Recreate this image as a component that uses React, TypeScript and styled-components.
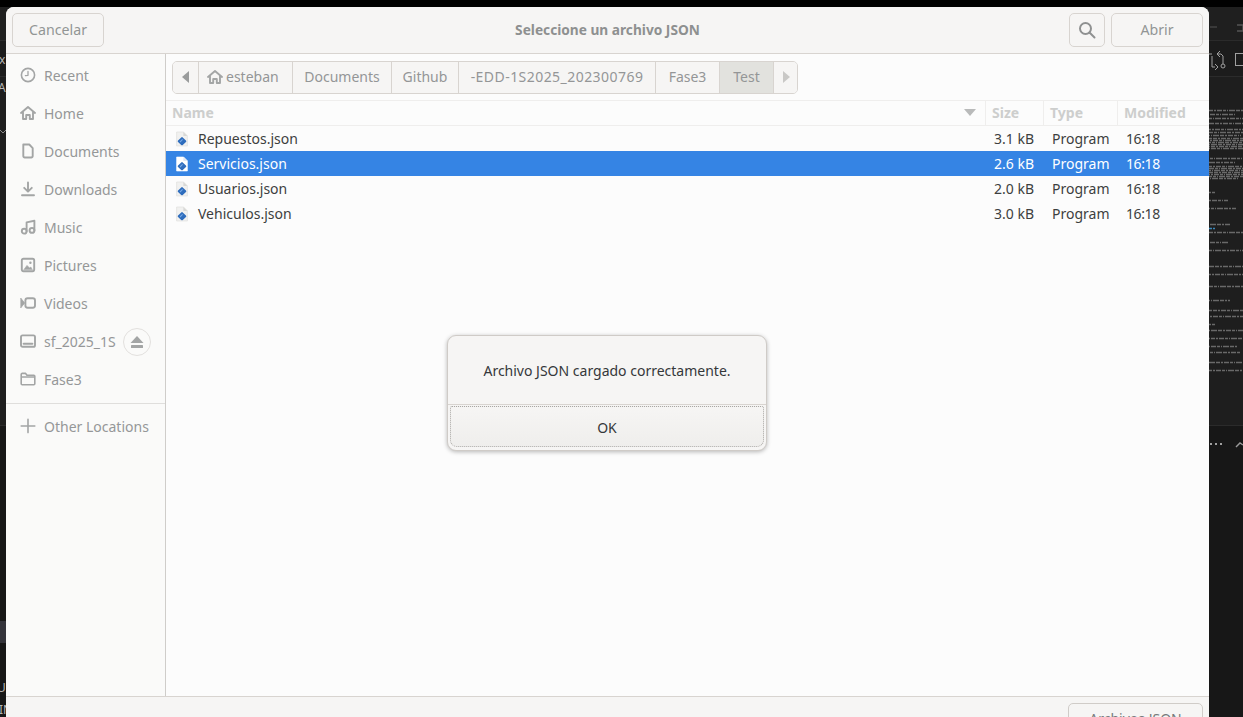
import React from "react";
import styled, { createGlobalStyle } from "styled-components";

const Global = createGlobalStyle`
  html, body { margin: 0; padding: 0; height: 100%; background: #171717; overflow: hidden; }
  #root { height: 100%; }
  * { box-sizing: border-box; }
`;

const Page = styled.div`
  position: relative;
  width: 1243px;
  height: 717px;
  overflow: hidden;
  font-family: "Noto Sans", "Open Sans", sans-serif;
  font-size: 14px;
`;

/* ---- editor behind the dialog ---- */
const Backdrop = styled.div`
  display: flex;
  flex-direction: column;
  height: 100%;
`;
const BlackStrip = styled.div`
  height: 7px;
  background: #000;
`;
const EditorBar = styled.div<{ $h: number; $bg: string }>`
  height: ${(p) => p.$h}px;
  flex: none;
  background: ${(p) => p.$bg};
  border-bottom: 1px solid #2b2b2b;
`;
const EditorPane = styled.div`
  height: 349px;
  flex: none;
  background: #1e1e1e;
  border-bottom: 1px solid #2b2b2b;
`;
const EditorBody = styled.div`
  flex: 1;
  background: #171717;
`;
const Peek = styled.span<{ $x: number; $y: number }>`
  position: absolute;
  left: ${(p) => p.$x}px;
  top: ${(p) => p.$y}px;
  color: #b5b5b5;
  font-size: 12px;
  line-height: 14px;
  font-family: "Noto Sans", sans-serif;
`;
const ActiveStrip = styled.div`
  position: absolute;
  left: 0;
  top: 621px;
  width: 6px;
  height: 22px;
  background: #33333a;
`;
const DocPreview = styled.svg`
  position: absolute;
  left: 1209px;
  top: 100px;
`;
const EditorIcons = styled.svg<{ $top: number }>`
  position: absolute;
  left: 1209px;
  top: ${(p) => p.$top}px;
`;
const LeftChevron = styled.svg`
  position: absolute;
  left: 0;
  top: 129px;
`;

/* ---- file chooser ---- */
const Win = styled.div`
  position: absolute;
  left: 6px;
  top: 7px;
  width: 1203px;
  height: 722px;
  background: #fafafa;
  border-radius: 8px 8px 0 0;
  display: flex;
  flex-direction: column;
  overflow: hidden;
`;
const Header = styled.header`
  position: relative;
  flex: none;
  height: 47px;
  padding: 6px;
  background: #f6f5f4;
  border-bottom: 1px solid #d8d4d0;
  display: flex;
  align-items: center;
  gap: 6px;
`;
const HeadBtn = styled.div<{ $w: number }>`
  width: ${(p) => p.$w}px;
  height: 34px;
  padding-bottom: 2px;
  border: 1px solid #d8d4d0;
  border-radius: 5px;
  background: #f6f5f4;
  color: #929595;
  font-size: 14.2px;
  display: flex;
  align-items: center;
  justify-content: center;
`;
const SearchBtn = styled(HeadBtn)`
  margin-left: auto;
  padding-bottom: 0;
`;
const Title = styled.div`
  position: absolute;
  left: 0;
  right: 0;
  top: 13px;
  text-align: center;
  font-weight: 700;
  font-size: 13.7px;
  line-height: 20px;
  color: #8e9090;
`;
const Main = styled.div`
  position: relative;
  flex: 1;
  display: flex;
  min-height: 0;
`;
const Side = styled.nav`
  flex: none;
  width: 160px;
  background: #fafaf9;
  border-right: 1px solid #cfcdca;
  display: flex;
  flex-direction: column;
  padding-top: 2px;
`;
const Place = styled.div<{ $h?: number }>`
  height: ${(p) => p.$h ?? 38}px;
  flex: none;
  display: flex;
  align-items: center;
  padding-left: 14px;
  gap: 8px;
  color: #959798;
  font-size: 14px;
  white-space: nowrap;
`;
const Eject = styled.div`
  position: absolute;
  left: 117px;
  top: 274px;
  width: 28px;
  height: 28px;
  border-radius: 50%;
  border: 1px solid #e2e0de;
  display: flex;
  align-items: center;
  justify-content: center;
`;
const SideRule = styled.div`
  height: 1px;
  background: #dfdedc;
  margin-top: 5px;
  margin-bottom: 3px;
`;
const Content = styled.section`
  flex: 1;
  min-width: 0;
  background: #fcfcfc;
  display: flex;
  flex-direction: column;
`;
const PathRow = styled.div`
  flex: none;
  height: 47px;
  padding: 7px 6px;
  border-bottom: 1px solid #efeeed;
`;
const PathBar = styled.div`
  display: inline-flex;
  height: 33px;
  border: 1px solid #d8d4d0;
  border-radius: 5px;
  overflow: hidden;
  background: #f6f5f4;
`;
const Crumb = styled.div<{ $w: number; $on?: boolean; $track?: number }>`
  width: ${(p) => p.$w}px;
  padding-bottom: 2px;
  border-right: 1px solid #d8d4d0;
  background: ${(p) => (p.$on ? "#e2e2de" : "#f6f5f4")};
  color: #949697;
  font-size: 14px;
  letter-spacing: ${(p) => p.$track ?? 0}px;
  display: flex;
  align-items: center;
  justify-content: center;
  gap: 4px;
  white-space: nowrap;
  &:last-child { border-right: 0; }
`;
const HomeCrumb = styled(Crumb)`
  justify-content: flex-start;
  padding-left: 8px;
  gap: 3px;
`;
const Cols = "820px 58px 74px 1fr";
const ColHead = styled.div`
  flex: none;
  height: 25px;
  display: grid;
  grid-template-columns: ${Cols};
  border-bottom: 1px solid #efeeed;
`;
const ColLabel = styled.div<{ $first?: boolean }>`
  display: flex;
  align-items: center;
  justify-content: space-between;
  padding: 0 ${(p) => (p.$first ? "9px" : "6px")} 2px 6px;
  border-right: 1px solid #efeeed;
  font-weight: 700;
  font-size: 14px;
  color: #cdcecd;
  &:last-child { border-right: 0; }
`;
const FileRow = styled.div<{ $on?: boolean }>`
  height: 25px;
  display: grid;
  grid-template-columns: ${Cols};
  align-items: center;
  background: ${(p) => (p.$on ? "#3584e4" : "transparent")};
  color: ${(p) => (p.$on ? "#ffffff" : "#3d3f40")};
  font-size: 14px;
`;
const NameCell = styled.div`
  display: flex;
  align-items: center;
  gap: 8px;
  padding-left: 8px;
`;
const Cell = styled.div<{ $track?: number }>`
  padding-left: 8px;
  letter-spacing: ${(p) => p.$track ?? 0}px;
`;
const Footer = styled.footer`
  flex: none;
  height: 33px;
  background: #f6f5f4;
  border-top: 1px solid #d8d4d0;
  display: flex;
  justify-content: flex-end;
  padding: 6px 6px 0 0;
`;
const Filter = styled.div`
  width: 135px;
  height: 34px;
  border: 1px solid #d0ccc8;
  border-radius: 5px;
  color: #777a7b;
  text-align: center;
  font-size: 14px;
  line-height: 30px;
`;

/* ---- message box ---- */
const Alert = styled.div`
  position: absolute;
  left: 447px;
  top: 335px;
  width: 320px;
  height: 116px;
  background: #f6f5f4;
  border: 1px solid #cfcbc7;
  border-radius: 9px;
  box-shadow: 0 1px 4px rgba(0, 0, 0, 0.28);
  display: flex;
  flex-direction: column;
  overflow: hidden;
`;
const AlertText = styled.div`
  height: 69px;
  flex: none;
  display: flex;
  align-items: center;
  justify-content: center;
  font-size: 14px;
  color: #35383a;
  border-bottom: 1px solid #d8d4d0;
`;
const AlertBtn = styled.div`
  flex: 1;
  margin: 1px 2px 3px;
  padding-top: 1px;
  border: 1px dotted #a9a7a4;
  border-radius: 2px 2px 7px 7px;
  background: linear-gradient(#f6f5f4, #efeeec);
  display: flex;
  align-items: center;
  justify-content: center;
  font-size: 14px;
  color: #35383a;
`;

/* ---- icons ---- */
const Ic = ({ children, c = "#a3a5a5", s = 16 }: { children: React.ReactNode; c?: string; s?: number }) => (
  <svg width={s} height={s} viewBox="0 0 16 16" fill="none" stroke={c} strokeWidth="1.9" strokeLinecap="round" strokeLinejoin="round" style={{ flex: "none" }}>
    {children}
  </svg>
);
const icons: Record<string, React.ReactNode> = {
  recent: (<><circle cx="8" cy="8" r="6.6" strokeWidth="1.6" /><path d="M8 4.5V8.3L5.4 8.6" strokeWidth="1.3" /></>),
  home: (<><path d="M1 8 8 2l7 6" /><path d="M3 7.5V14h3.2v-4h3.6v4H13V7.5" /></>),
  doc: (<path d="M3.3 1.5h6l3.4 3.6v8a1.4 1.4 0 0 1-1.4 1.4H4.7a1.4 1.4 0 0 1-1.4-1.4Z" />),
  down: (<><path d="M8 1.5V10M4.2 6.8 8 10.6l3.8-3.8" /><path d="M2 14.3h12" /></>),
  music: (<><circle cx="4.2" cy="12.2" r="2.4" /><circle cx="12" cy="11.4" r="2.4" /><path d="M6.6 12.2V3.4l7.8-1.6v9.6" /></>),
  pic: (<><rect x="1.8" y="1.8" width="12.4" height="12.4" rx="1.6" /><circle cx="10.4" cy="5.8" r="1.2" fill="#a3a5a5" stroke="none" /><path d="M4 12.4 7 8.4l2.6 2.6 1.2-1 1.4 2.4Z" fill="#a3a5a5" strokeWidth=".6" /></>),
  video: (<><rect x="5.4" y="3.2" width="9.6" height="9.6" rx="2.2" /><path d="M1 3.4 4.6 8 1 12.6Z" fill="#a3a5a5" strokeWidth=".8" /></>),
  drive: (<><rect x="1" y="2.4" width="14" height="11.4" rx="1.6" /><path d="M3.6 10.8h8.8" /></>),
  folder: (<path d="M1.2 3.4a1 1 0 0 1 1-1h3.4l1.4 1.8h6.8a1 1 0 0 1 1 1v7.6a1 1 0 0 1-1 1H2.2a1 1 0 0 1-1-1Z M1.2 6h13.6" strokeWidth="1.6" />),
  plus: (<path d="M8 1.4v13.2M1.2 8h13.6" strokeWidth="1.6" />),
};

const JsonFile = ({ on }: { on?: boolean }) => (
  <svg width="16" height="16" viewBox="0 0 16 16" style={{ flex: "none" }}>
    <path d="M2.6 1h7l3.8 3.8V15H2.6Z" fill={on ? "#fff" : "#f1f1f0"} stroke={on ? "#fff" : "#dcdcda"} strokeWidth=".6" />
    <path d="M9.4 1v4h4Z" fill={on ? "#dfe7f2" : "#d8d8d6"} />
    <path d="M8 7.2 11.2 10.2 8 13.2 4.8 10.2Z" fill="#2f6dbd" stroke="#2f6dbd" strokeWidth="2.2" strokeLinejoin="round" />
    <path d="M6 11 8.6 8.4" stroke="#74a6e4" strokeWidth="1.1" />
  </svg>
);

const places = [
  ["recent", "Recent"],
  ["home", "Home"],
  ["doc", "Documents"],
  ["down", "Downloads"],
  ["music", "Music"],
  ["pic", "Pictures"],
  ["video", "Videos"],
  ["drive", "sf_2025_1S"],
  ["folder", "Fase3"],
];
const crumbs: [string, number, number][] = [
  ["Documents", 99, 0],
  ["Github", 67, 0],
  ["-EDD-1S2025_202300769", 197, 0.45],
  ["Fase3", 64, 0],
];
const files = [
  ["Repuestos.json", "3.1 kB"],
  ["Servicios.json", "2.6 kB"],
  ["Usuarios.json", "2.0 kB"],
  ["Vehiculos.json", "3.0 kB"],
];

/* greyed-out document text seen past the dialog's right edge, as y / length pairs */
const docLines: [number, number][] = [
  [10, 34], [14, 26], [18, 34], [23, 34], [29, 34], [32, 34], [35, 32], [38, 34], [40, 34], [42, 34], [44, 34], [46, 34], [48, 34],
  [58, 34], [62, 26], [66, 34], [68, 34], [70, 34], [72, 34], [74, 34], [76, 34], [78, 30],
  [92, 6], [100, 19], [108, 27], [124, 22], [132, 34], [142, 19], [150, 34], [166, 34], [174, 34], [186, 34],
  [200, 21], [210, 34], [216, 34], [224, 6], [230, 34], [238, 34], [246, 29], [252, 31], [262, 34], [270, 34],
];

export default function App() {
  return (
    <Page>
      <Global />
      <Backdrop>
        <BlackStrip />
        <EditorBar $h={34} $bg="#1f1f1f" />
        <EditorBar $h={36} $bg="#1c1c1c" />
        <EditorPane />
        <EditorBody />
      </Backdrop>
      <Peek $x={-1} $y={53}>x</Peek>
      <Peek $x={-2} $y={81}>A</Peek>
      <Peek $x={-3} $y={681}>U</Peek>
      <Peek $x={-1} $y={703}>IN</Peek>
      <LeftChevron width="6" height="6" viewBox="0 0 6 6" fill="none" stroke="#8a8a8a" strokeWidth="1">
        <path d="M0 1l3 3 3-3" />
      </LeftChevron>
      <ActiveStrip />
      <EditorIcons $top={7} width="34" height="70" viewBox="0 0 34 70" fill="none" stroke="#a0a0a0" strokeWidth="1">
        <path d="M1 20h7" stroke="#555" />
        <path d="M28 24h6M28 18h6v6" stroke="#555" strokeWidth="1.4" />
        <path d="M0 47h3M3 49v11M8 47l4 0 2 2v8M11 44 8 47l3 3M3 60h3M6 57l3 3-3 3" />
        <circle cx="14" cy="59" r="2" />
        <rect x="26.500" y="46.500" width="8" height="12" />
      </EditorIcons>
      <DocPreview width="34" height="290" viewBox="0 0 34 290" fill="none">
        {docLines.map(([y, w], i) => (
          <line
            key={i}
            x1="0"
            x2={w}
            y1={y + 0.5}
            y2={y + 0.5}
            stroke="#b4b4b4"
            strokeOpacity="0.5"
            strokeWidth="1.6"
            strokeDasharray="4 1 2 1 5 1 3 1 1 1 6 1"
            strokeDashoffset={(i * 7) % 26}
          />
        ))}
        <line x1="0" x2="6" y1="128.5" y2="128.5" stroke="#3c87b8" strokeWidth="1.6" strokeDasharray="3 1" />
      </DocPreview>
      <EditorIcons $top={440} width="34" height="10" viewBox="0 0 34 10" fill="none">
        <path d="M1 4h2M6 4h2M11 4h2" stroke="#a0a0a0" strokeWidth="2" />
        <path d="M27 7l4-4 3 2" stroke="#9a9a9a" strokeWidth="1.4" />
      </EditorIcons>

      <Win>
        <Header>
          <HeadBtn $w={92}>Cancelar</HeadBtn>
          <Title>Seleccione un archivo JSON</Title>
          <SearchBtn $w={36}>
            <svg width="18" height="18" viewBox="0 0 18 18" fill="none" stroke="#8f9191" strokeWidth="2">
              <circle cx="7.5" cy="7.5" r="5.5" />
              <path d="m11.5 11.5 5 5" strokeLinecap="round" />
            </svg>
          </SearchBtn>
          <HeadBtn $w={92}>Abrir</HeadBtn>
        </Header>
        <Main>
          <Side>
            {places.map(([ic, label]) => (
              <Place key={label}>
                <Ic>{icons[ic]}</Ic>
                {label}
              </Place>
            ))}
            <SideRule />
            <Place $h={38}>
              <Ic>{icons.plus}</Ic>
              Other Locations
            </Place>
          </Side>
          <Eject>
            <svg width="16" height="16" viewBox="0 0 16 16" fill="#a3a5a5">
              <path d="M8 2 14.5 9h-13Z" />
              <rect x="2" y="11" width="12" height="3" rx=".6" />
            </svg>
          </Eject>
          <Content>
            <PathRow>
              <PathBar>
                <Crumb $w={26}>
                  <svg width="8" height="12" viewBox="0 0 8 12" fill="#9a9c9c"><path d="M7 0v12L0 6Z" /></svg>
                </Crumb>
                <HomeCrumb $w={94}>
                  <Ic s={16}>{icons.home}</Ic>
                  esteban
                </HomeCrumb>
                {crumbs.map(([t, w, k]) => (
                  <Crumb key={t} $w={w} $track={k}>{t}</Crumb>
                ))}
                <Crumb $w={54} $on>Test</Crumb>
                <Crumb $w={23}>
                  <svg width="8" height="12" viewBox="0 0 8 12" fill="#c9c8c6"><path d="M1 0v12l7-6Z" /></svg>
                </Crumb>
              </PathBar>
            </PathRow>
            <ColHead>
              <ColLabel $first>
                Name
                <svg width="12" height="7" viewBox="0 0 12 7" fill="#b9baba"><path d="M0 0h12L6 7Z" /></svg>
              </ColLabel>
              <ColLabel>Size</ColLabel>
              <ColLabel>Type</ColLabel>
              <ColLabel>Modified</ColLabel>
            </ColHead>
            {files.map(([n, s], i) => (
              <FileRow key={n} $on={i === 1}>
                <NameCell>
                  <JsonFile on={i === 1} />
                  {n}
                </NameCell>
                <Cell>{s}</Cell>
                <Cell>Program</Cell>
                <Cell $track={-0.4}>16:18</Cell>
              </FileRow>
            ))}
          </Content>
        </Main>
        <Footer>
          <Filter>Archivos JSON</Filter>
        </Footer>
      </Win>

      <Alert>
        <AlertText>Archivo JSON cargado correctamente.</AlertText>
        <AlertBtn>OK</AlertBtn>
      </Alert>
    </Page>
  );
}
